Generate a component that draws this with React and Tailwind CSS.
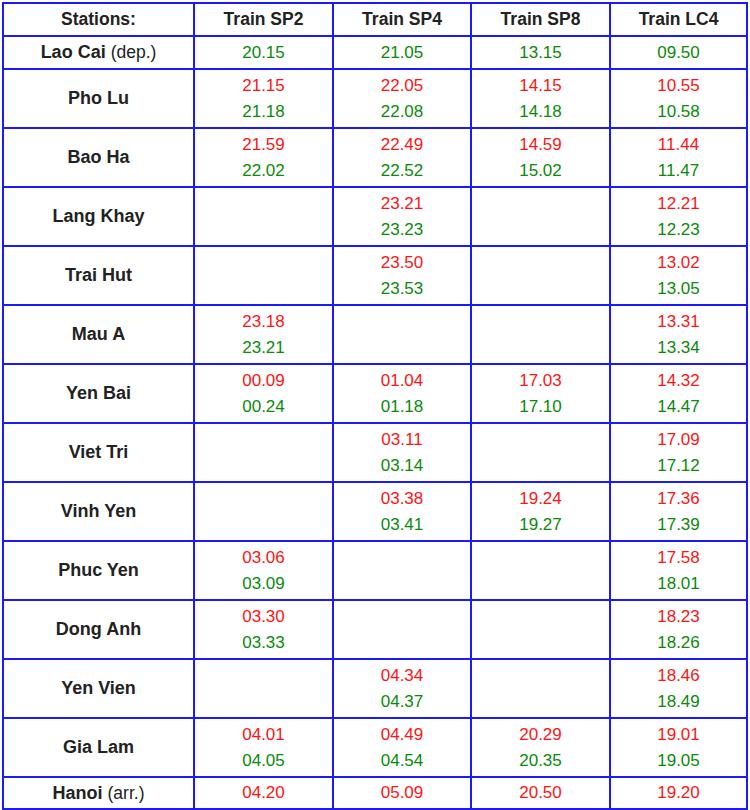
import React from 'react';

const trains = ['Train SP2', 'Train SP4', 'Train SP8', 'Train LC4'];

// each stop: [arrival, departure] or null
const stops = [
  { name: 'Pho Lu', times: [['21.15', '21.18'], ['22.05', '22.08'], ['14.15', '14.18'], ['10.55', '10.58']] },
  { name: 'Bao Ha', times: [['21.59', '22.02'], ['22.49', '22.52'], ['14.59', '15.02'], ['11.44', '11.47']] },
  { name: 'Lang Khay', times: [null, ['23.21', '23.23'], null, ['12.21', '12.23']] },
  { name: 'Trai Hut', times: [null, ['23.50', '23.53'], null, ['13.02', '13.05']] },
  { name: 'Mau A', times: [['23.18', '23.21'], null, null, ['13.31', '13.34']] },
  { name: 'Yen Bai', times: [['00.09', '00.24'], ['01.04', '01.18'], ['17.03', '17.10'], ['14.32', '14.47']] },
  { name: 'Viet Tri', times: [null, ['03.11', '03.14'], null, ['17.09', '17.12']] },
  { name: 'Vinh Yen', times: [null, ['03.38', '03.41'], ['19.24', '19.27'], ['17.36', '17.39']] },
  { name: 'Phuc Yen', times: [['03.06', '03.09'], null, null, ['17.58', '18.01']] },
  { name: 'Dong Anh', times: [['03.30', '03.33'], null, null, ['18.23', '18.26']] },
  { name: 'Yen Vien', times: [null, ['04.34', '04.37'], null, ['18.46', '18.49']] },
  { name: 'Gia Lam', times: [['04.01', '04.05'], ['04.49', '04.54'], ['20.29', '20.35'], ['19.01', '19.05']] },
];

const departures = ['20.15', '21.05', '13.15', '09.50'];
const arrivals = ['04.20', '05.09', '20.50', '19.20'];

const cell = 'border-2 border-[#1a1aff] text-center align-middle p-0';

export default function App() {
  return (
    <div className="p-[2px] bg-white" style={{ fontFamily: '"Liberation Sans", Arial, sans-serif' }}>
      <table className="table-fixed border-collapse w-[744px] text-[#222]">
        <colgroup>
          <col className="w-[191px]" />
          <col className="w-[139px]" />
          <col className="w-[138px]" />
          <col className="w-[139px]" />
          <col className="w-[137px]" />
        </colgroup>
        <thead>
          <tr>
            <th className={`${cell} h-[33px] text-[17.5px] font-bold`}>Stations:</th>
            {trains.map((t) => (
              <th key={t} className={`${cell} h-[33px] text-[17.5px] font-bold`}>{t}</th>
            ))}
          </tr>
        </thead>
        <tbody>
          <tr>
            <td className={`${cell} h-[33px] text-[18px]`}>
              <span className="font-bold">Lao Cai</span> <span className="text-[17.5px]">(dep.)</span>
            </td>
            {departures.map((d, i) => (
              <td key={i} className={`${cell} h-[33px] text-[17px] text-[#0a8a0a]`}>{d}</td>
            ))}
          </tr>
          {stops.map((s) => (
            <tr key={s.name}>
              <td className={`${cell} h-[59px] text-[18px] font-bold`}>{s.name}</td>
              {s.times.map((t, i) => (
                <td key={i} className={`${cell} h-[59px] text-[17px] leading-[26px]`}>
                  {t && (
                    <>
                      <div className="text-[#ff1414]">{t[0]}</div>
                      <div className="text-[#0a8a0a]">{t[1]}</div>
                    </>
                  )}
                </td>
              ))}
            </tr>
          ))}
          <tr>
            <td className={`${cell} h-[32px] text-[18px]`}>
              <span className="font-bold">Hanoi</span> <span className="text-[17.5px]">(arr.)</span>
            </td>
            {arrivals.map((a, i) => (
              <td key={i} className={`${cell} h-[32px] text-[17px] text-[#ff1414]`}>{a}</td>
            ))}
          </tr>
        </tbody>
      </table>
    </div>
  );
}
